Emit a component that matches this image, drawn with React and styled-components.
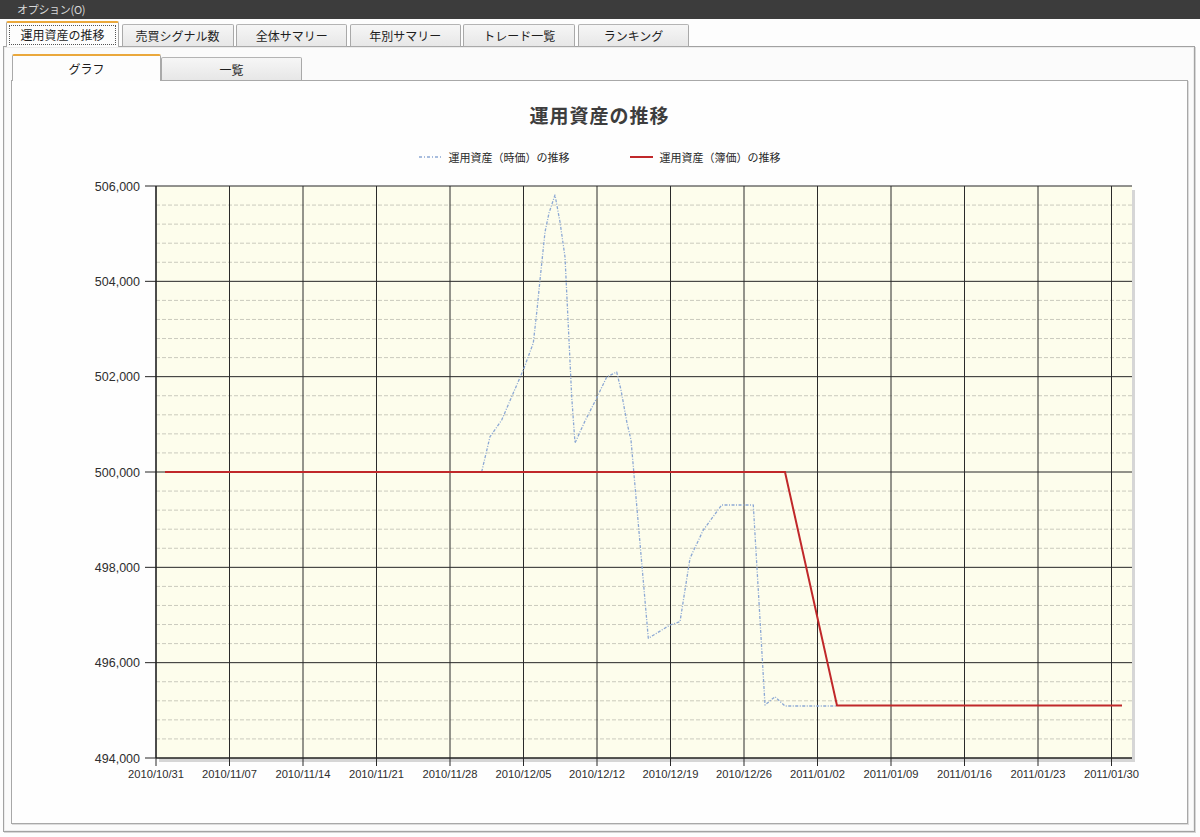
import React from "react";
import styled, { createGlobalStyle } from "styled-components";

const GlobalStyle = createGlobalStyle`
  html, body {
    margin: 0;
    padding: 0;
    background: #fdfdfd;
  }
  body {
    font-family: "Noto Sans CJK JP", "Liberation Sans", sans-serif;
    color: #222;
  }
`;

const Page = styled.div`
  width: 1200px;
  height: 837px;
  overflow: hidden;
  background: #fdfdfd;
`;

const MenuBar = styled.div`
  height: 19px;
  background: #3c3c3c;
  display: flex;
  align-items: center;
  padding-left: 17px;
`;

const MenuItem = styled.span`
  font-size: 11px;
  line-height: 19px;
  color: #d8d8d8;
  letter-spacing: -0.3px;
`;

const TabStrip = styled.div`
  display: flex;
  align-items: flex-end;
  gap: ${(p) => p.$gap}px;
  padding: ${(p) => p.$top}px 0 0 ${(p) => p.$left}px;
  position: relative;
  z-index: 2;
`;

const Tab = styled.div`
  box-sizing: border-box;
  width: ${(p) => p.$width}px;
  height: ${(p) => (p.$active ? p.$height + 3 : p.$height)}px;
  margin-bottom: -1px;
  display: flex;
  align-items: center;
  justify-content: center;
  font-size: 12px;
  color: #1e1e1e;
  border: 1px solid #a9a9a9;
  border-bottom: ${(p) => (p.$active ? "none" : "1px solid #a9a9a9")};
  border-top: ${(p) => (p.$active ? "2px solid #eaa83c" : "1px solid #b4b4b4")};
  border-radius: 2px 2px 0 0;
  background: ${(p) =>
    p.$active ? "#fdfdfd" : "linear-gradient(#f6f6f6, #e7e7e7)"};
  padding-bottom: ${(p) => (p.$active ? "1px" : "0")};
`;

const TabLabel = styled.span`
  box-sizing: border-box;
  display: flex;
  align-items: center;
  justify-content: center;
  width: ${(p) => (p.$focused ? "calc(100% - 4px)" : "auto")};
  height: ${(p) => (p.$focused ? "20px" : "auto")};
  border: ${(p) => (p.$focused ? "1px dotted #555" : "none")};
`;

const Panel = styled.div`
  box-sizing: border-box;
  height: 786px;
  margin: 0 5px 0 3px;
  border: 1px solid #a2a2a2;
  box-shadow: inset 0 0 0 1px #ececec, 1px 1px 0 #d6d6d6;
  background: #fbfbfb;
  position: relative;
  z-index: 1;
`;

const SubPanel = styled.div`
  box-sizing: border-box;
  height: 744px;
  margin: 0 6px 0 7px;
  border: 1px solid #a8a8a8;
  box-shadow: 1px 1px 0 #dcdcdc;
  background: #fefefe;
  display: flex;
  flex-direction: column;
  align-items: center;
  position: relative;
  z-index: 1;
`;

const ChartTitle = styled.h1`
  margin: 0;
  padding-top: 22px;
  height: 24px;
  line-height: 24px;
  font-size: 19px;
  font-weight: 700;
  color: #3d3d3d;
  letter-spacing: 1px;
`;

const Legend = styled.div`
  display: flex;
  align-items: center;
  gap: 60px;
  margin-top: 22px;
  height: 16px;
`;

const LegendItem = styled.div`
  display: flex;
  align-items: center;
  gap: 7px;
  font-size: 11px;
  line-height: 16px;
  color: #2a2a2a;
`;

const Swatch = styled.svg`
  display: block;
  width: 23px;
  height: 4px;
`;

const Plot = styled.svg`
  display: block;
  margin-top: 5px;
  font-family: "Liberation Sans", "DejaVu Sans", sans-serif;
`;

// plot frame in page pixels
const LEFT = 156;
const RIGHT = 1132;
const TOP = 186;
const BOTTOM = 758;
const Y_MIN = 494000;
const Y_MAX = 506000;
const DAY = 10.5;

const yOf = (v) => BOTTOM - ((v - Y_MIN) / (Y_MAX - Y_MIN)) * (BOTTOM - TOP);
const xOfDay = (d) => LEFT + d * DAY;

const weeks = [
  "2010/10/31",
  "2010/11/07",
  "2010/11/14",
  "2010/11/21",
  "2010/11/28",
  "2010/12/05",
  "2010/12/12",
  "2010/12/19",
  "2010/12/26",
  "2011/01/02",
  "2011/01/09",
  "2011/01/16",
  "2011/01/23",
  "2011/01/30",
];

const majors = [506000, 504000, 502000, 500000, 498000, 496000, 494000];

const minors = [];
for (let v = Y_MIN + 400; v < Y_MAX; v += 400) {
  if ((v - Y_MIN) % 2000 !== 0) minors.push(v);
}

// market-value series
const marketValue = [
  [481.7, 471.7], [490, 436.7], [501.7, 420], [513.3, 393], [523.3, 370],
  [533.3, 343], [537, 310], [540, 280], [545, 232], [549, 213], [555, 195],
  [560, 222], [565, 257], [571.7, 396.7], [575, 443], [585, 421],
  [596.7, 398], [606.7, 377], [616.7, 372], [621, 390], [627, 423],
  [631, 440], [648.3, 638.3], [670, 625], [680, 621.7], [690, 558.3],
  [703.3, 530], [721.7, 505], [753.3, 505], [765, 705], [775, 696.7],
  [785, 706], [836, 706],
];

// book-value series
const bookValue = [
  [165, yOf(500000)],
  [785, yOf(500000)],
  [837, yOf(495100)],
  [1122, yOf(495100)],
];

const toPoints = (pts) => pts.map(([x, y]) => `${x},${y}`).join(" ");

const BLUE = "#8ca8d4";
const RED = "#c0282a";

function Chart() {
  return (
    <Plot width="1175" height="630" viewBox="12 170 1175 630">
      <rect x={LEFT + 3} y={TOP + 4} width={RIGHT - LEFT} height={BOTTOM - TOP} fill="#d6d6d6" />
      <rect x={LEFT} y={TOP} width={RIGHT - LEFT} height={BOTTOM - TOP} fill="#fdfdec" />

      {minors.map((v) => (
        <line
          key={v}
          x1={LEFT}
          x2={RIGHT}
          y1={yOf(v)}
          y2={yOf(v)}
          stroke="#cacabd"
          strokeWidth="1"
          strokeDasharray="4 2"
        />
      ))}

      {majors.map((v) => (
        <g key={v}>
          <line x1={LEFT - 11} x2={RIGHT} y1={yOf(v)} y2={yOf(v)} stroke="#262626" strokeWidth="1" />
          <text x={140} y={yOf(v) + 4.5} textAnchor="end" fontSize="12.5" fill="#2e2e2e">
            {v.toLocaleString("en-US")}
          </text>
        </g>
      ))}

      {weeks.map((w, i) => {
        const x = xOfDay(i * 7);
        return (
          <g key={w}>
            <line x1={x} x2={x} y1={TOP} y2={BOTTOM + 8} stroke="#2a2a2a" strokeWidth="1" />
            <text x={x} y={778} textAnchor="middle" fontSize="11.2" fill="#2e2e2e">
              {w}
            </text>
          </g>
        );
      })}

      <line x1={LEFT} x2={LEFT} y1={TOP} y2={BOTTOM} stroke="#1e1e1e" strokeWidth="1.2" />
      <line x1={LEFT} x2={RIGHT} y1={BOTTOM} y2={BOTTOM} stroke="#1e1e1e" strokeWidth="1.2" />

      <polyline
        points={toPoints(marketValue)}
        fill="none"
        stroke={BLUE}
        strokeWidth="1.3"
        strokeDasharray="3 1.5 1 1.5"
        strokeLinejoin="round"
      />
      <polyline
        points={toPoints(bookValue)}
        fill="none"
        stroke={RED}
        strokeWidth="2"
        strokeLinejoin="miter"
      />
    </Plot>
  );
}

const topTabs = [
  { label: "運用資産の推移", width: 113, active: true },
  { label: "売買シグナル数", width: 112 },
  { label: "全体サマリー", width: 111 },
  { label: "年別サマリー", width: 111 },
  { label: "トレード一覧", width: 112 },
  { label: "ランキング", width: 111 },
];

const subTabs = [
  { label: "グラフ", width: 149, active: true },
  { label: "一覧", width: 141 },
];

export default function App() {
  return (
    <Page>
      <GlobalStyle />
      <MenuBar>
        <MenuItem>オプション(O)</MenuItem>
      </MenuBar>

      <TabStrip $gap={2.6} $top={2} $left={6}>
        {topTabs.map((t) => (
          <Tab key={t.label} $width={t.width} $height={23} $active={t.active}>
            <TabLabel $focused={t.active}>{t.label}</TabLabel>
          </Tab>
        ))}
      </TabStrip>

      <Panel>
        <TabStrip $gap={0} $top={7} $left={8}>
          {subTabs.map((t) => (
            <Tab key={t.label} $width={t.width} $height={24} $active={t.active}>
              <TabLabel>{t.label}</TabLabel>
            </Tab>
          ))}
        </TabStrip>

        <SubPanel>
          <ChartTitle>運用資産の推移</ChartTitle>
          <Legend>
            <LegendItem>
              <Swatch viewBox="0 0 23 4">
                <line x1="0" x2="23" y1="2" y2="2" stroke={BLUE} strokeWidth="1.4" strokeDasharray="3 2 1 2" />
              </Swatch>
              運用資産（時価）の推移
            </LegendItem>
            <LegendItem>
              <Swatch viewBox="0 0 23 4">
                <line x1="0" x2="23" y1="2" y2="2" stroke={RED} strokeWidth="2" />
              </Swatch>
              運用資産（簿価）の推移
            </LegendItem>
          </Legend>
          <Chart />
        </SubPanel>
      </Panel>
    </Page>
  );
}
